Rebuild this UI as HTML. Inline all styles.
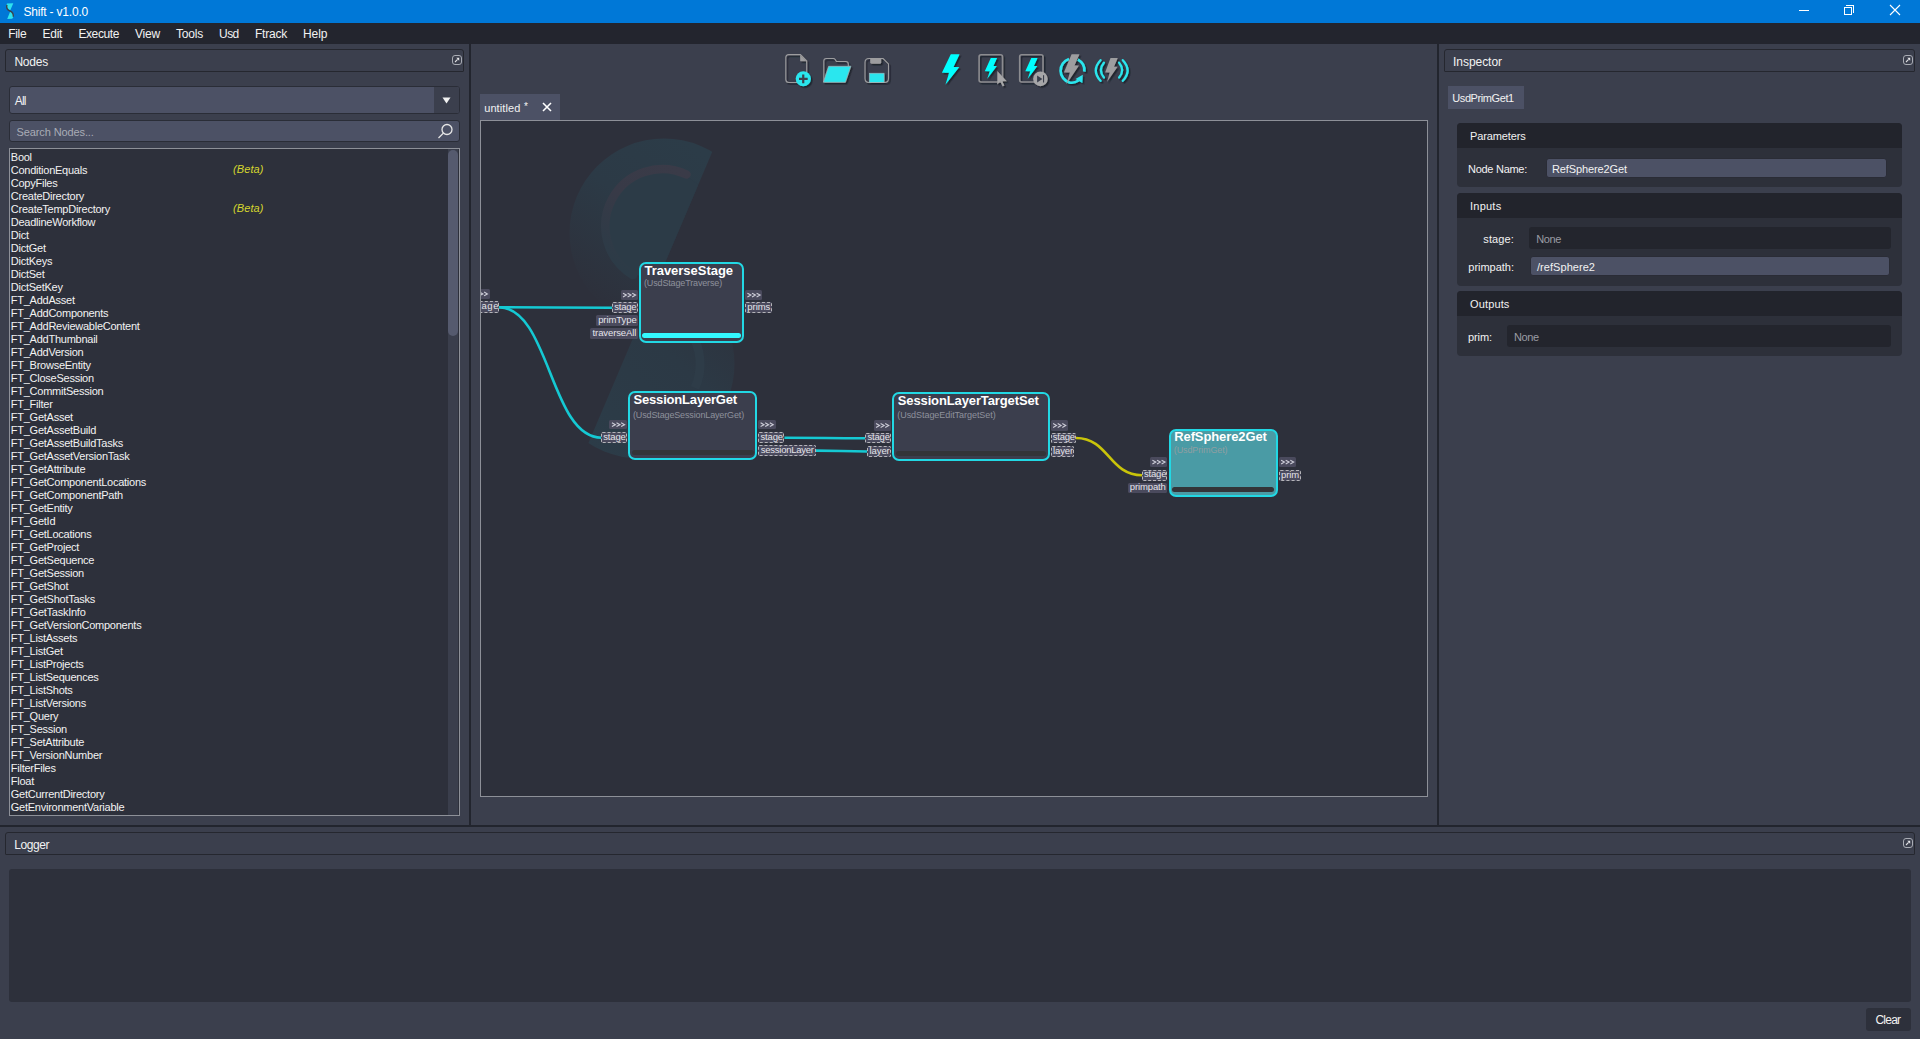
<!DOCTYPE html>
<html><head><meta charset="utf-8"><style>
*{margin:0;padding:0;box-sizing:border-box}
html,body{width:1920px;height:1039px;overflow:hidden;background:#3b3f4d;font-family:"Liberation Sans",sans-serif;color:#e6e6e6}
.a{position:absolute}
.t{position:absolute;white-space:nowrap}
#title{left:0;top:0;width:1920px;height:23px;background:#0078d7;color:#fff}
#menu{left:0;top:23px;width:1920px;height:21px;background:#23252e;font-size:12px;color:#f0f0f0}
.hdr{position:absolute;border:1px solid #25272f;border-radius:3px 3px 1px 1px;background:#3b3f4d;font-size:12px;color:#f0f0f0}
.flt{position:absolute;width:10px;height:10px;border:1.6px solid #a9acb4;border-radius:3px}
.split{position:absolute;background:#22252e}
.list{position:absolute;background:#2d303b;border:1px solid #8d9098}
.item{position:absolute;left:10px;font-size:11px;color:#f2f2f2;white-space:nowrap}
.beta{position:absolute;left:233px;font-size:11px;color:#c8c834;font-style:italic;white-space:nowrap}
.grp{position:absolute;border-radius:4px;background:#2d303a;overflow:hidden}
.gh{position:absolute;left:0;top:0;right:0;background:#22242c;font-size:12px;color:#f0f0f0}
.fld{position:absolute;border-radius:3px;font-size:11px}
.lbl{position:absolute;font-size:11px;color:#f0f0f0;white-space:nowrap}
</style></head><body>
<div class="a" style="left:0px;top:0px;width:1920px;height:23px;background:#0078d7;"></div>
<svg class="a" style="left:0;top:0" width="24" height="23" viewBox="0 0 24 23">
<path d="M7 3.6 L13.3 3.3 L10.3 10.3 C8.5 10 7 8.5 6.6 6.5 C6.5 5 6.6 4.2 7 3.6Z" fill="#2ee3ee"/>
<path d="M10.4 11 C12 11.8 13.5 13.5 13.5 15.5 C13.5 17 12.9 18.3 12 18.7 L7.2 18.9 Z" fill="#2ee3ee"/>
<path d="M6.9 4.8 C6.1 8 7.5 10 10 11 C12.5 12 13.6 13.8 13.3 16.8" stroke="#3a4350" stroke-width="1.4" fill="none"/>
</svg>
<div class="t" style="left:23.40px;top:6px;font-size:12px;line-height:12px;color:#ffffff;letter-spacing:-0.191px;">Shift - v1.0.0</div>
<div class="a" style="left:1799px;top:10px;width:10px;height:1px;background:#ffffff;"></div>
<div class="a" style="left:1844px;top:7px;width:8px;height:8px;border:1px solid #fff"></div>
<div class="a" style="left:1846px;top:5px;width:8px;height:8px;border-top:1px solid #fff;border-right:1px solid #fff"></div>
<svg class="a" style="left:1889px;top:4px" width="12" height="12" viewBox="0 0 12 12"><path d="M1 1L11 11M11 1L1 11" stroke="#fff" stroke-width="1.1"/></svg>
<div class="a" style="left:0px;top:23px;width:1920px;height:21px;background:#23252e;"></div>
<div class="t" style="left:8.25px;top:28px;font-size:12px;line-height:12px;color:#f2f2f2;letter-spacing:-0.311px;">File</div>
<div class="t" style="left:42.50px;top:28px;font-size:12px;line-height:12px;color:#f2f2f2;letter-spacing:-0.247px;">Edit</div>
<div class="t" style="left:78.40px;top:28px;font-size:12px;line-height:12px;color:#f2f2f2;letter-spacing:-0.394px;">Execute</div>
<div class="t" style="left:135.00px;top:28px;font-size:12px;line-height:12px;color:#f2f2f2;letter-spacing:-0.199px;">View</div>
<div class="t" style="left:176.00px;top:28px;font-size:12px;line-height:12px;color:#f2f2f2;letter-spacing:-0.203px;">Tools</div>
<div class="t" style="left:219.00px;top:28px;font-size:12px;line-height:12px;color:#f2f2f2;letter-spacing:-0.531px;">Usd</div>
<div class="t" style="left:255.00px;top:28px;font-size:12px;line-height:12px;color:#f2f2f2;letter-spacing:-0.224px;">Ftrack</div>
<div class="t" style="left:303.00px;top:28px;font-size:12px;line-height:12px;color:#f2f2f2;letter-spacing:-0.047px;">Help</div>
<div class="a" style="left:469px;top:44px;width:2px;height:781px;background:#22252e;"></div>
<div class="a" style="left:1437px;top:44px;width:2px;height:781px;background:#22252e;"></div>
<div class="a" style="left:0px;top:825px;width:1920px;height:2px;background:#22252e;"></div>
<div class="hdr" style="left:5px;top:49px;width:459px;height:23px"></div>
<div class="t" style="left:14.40px;top:56px;font-size:12px;line-height:12px;color:#f2f2f2;letter-spacing:-0.197px;">Nodes</div>
<div class="flt" style="left:452px;top:55px"></div>
<svg class="a" style="left:454px;top:57px" width="6" height="6" viewBox="0 0 6 6"><path d="M1 5L3.6 2.4" stroke="#e0e0e4" stroke-width="1.1"/><path d="M2.3 0.8H5.2V3.7Z" fill="#e8e8ec"/></svg>
<div class="a" style="left:9px;top:86px;width:451px;height:28px;background:#4c5165;border:1px solid #2a2d37;border-radius:3px;overflow:hidden"><div class="a" style="left:424px;top:0;width:26px;height:26px;background:#3b3f4d"></div></div>
<svg class="a" style="left:442px;top:97px" width="9" height="7" viewBox="0 0 9 7"><path d="M0.5 0.5H8.5L4.5 6.5Z" fill="#f2f2f2"/></svg>
<div class="t" style="left:14.75px;top:95px;font-size:12px;line-height:12px;color:#f2f2f2;letter-spacing:-0.848px;">All</div>
<div class="a" style="left:9px;top:120px;width:451px;height:22px;background:#4c5165;border:1px solid #2a2d37;border-radius:3px"></div>
<div class="t" style="left:16.50px;top:127px;font-size:11px;line-height:11px;color:#a9acb6;letter-spacing:-0.108px;">Search Nodes...</div>
<svg class="a" style="left:436px;top:122px" width="18" height="18" viewBox="0 0 18 18"><circle cx="11" cy="7.5" r="5" stroke="#e6e6e6" stroke-width="1.3" fill="none"/><path d="M7.5 11L2.5 16" stroke="#e6e6e6" stroke-width="1.3"/></svg>
<div class="list" style="left:9px;top:148px;width:451px;height:668px"></div>
<div class="a" style="left:448px;top:149px;width:10px;height:666px;background:#3a3e4c;"></div>
<div class="a" style="left:447.5px;top:149.5px;width:10.5px;height:186.5px;background:#555a6e;border-radius:5px"></div>
<div class="t" style="left:10.80px;top:152px;font-size:11px;line-height:11px;color:#f2f2f2;letter-spacing:-0.25px;">Bool</div>
<div class="t" style="left:10.80px;top:165px;font-size:11px;line-height:11px;color:#f2f2f2;letter-spacing:-0.25px;">ConditionEquals</div>
<div class="t" style="left:10.80px;top:178px;font-size:11px;line-height:11px;color:#f2f2f2;letter-spacing:-0.25px;">CopyFiles</div>
<div class="t" style="left:10.80px;top:191px;font-size:11px;line-height:11px;color:#f2f2f2;letter-spacing:-0.25px;">CreateDirectory</div>
<div class="t" style="left:10.80px;top:204px;font-size:11px;line-height:11px;color:#f2f2f2;letter-spacing:-0.25px;">CreateTempDirectory</div>
<div class="t" style="left:10.80px;top:217px;font-size:11px;line-height:11px;color:#f2f2f2;letter-spacing:-0.25px;">DeadlineWorkflow</div>
<div class="t" style="left:10.80px;top:230px;font-size:11px;line-height:11px;color:#f2f2f2;letter-spacing:-0.25px;">Dict</div>
<div class="t" style="left:10.80px;top:243px;font-size:11px;line-height:11px;color:#f2f2f2;letter-spacing:-0.25px;">DictGet</div>
<div class="t" style="left:10.80px;top:256px;font-size:11px;line-height:11px;color:#f2f2f2;letter-spacing:-0.25px;">DictKeys</div>
<div class="t" style="left:10.80px;top:269px;font-size:11px;line-height:11px;color:#f2f2f2;letter-spacing:-0.25px;">DictSet</div>
<div class="t" style="left:10.80px;top:282px;font-size:11px;line-height:11px;color:#f2f2f2;letter-spacing:-0.25px;">DictSetKey</div>
<div class="t" style="left:10.80px;top:295px;font-size:11px;line-height:11px;color:#f2f2f2;letter-spacing:-0.25px;">FT_AddAsset</div>
<div class="t" style="left:10.80px;top:308px;font-size:11px;line-height:11px;color:#f2f2f2;letter-spacing:-0.25px;">FT_AddComponents</div>
<div class="t" style="left:10.80px;top:321px;font-size:11px;line-height:11px;color:#f2f2f2;letter-spacing:-0.25px;">FT_AddReviewableContent</div>
<div class="t" style="left:10.80px;top:334px;font-size:11px;line-height:11px;color:#f2f2f2;letter-spacing:-0.25px;">FT_AddThumbnail</div>
<div class="t" style="left:10.80px;top:347px;font-size:11px;line-height:11px;color:#f2f2f2;letter-spacing:-0.25px;">FT_AddVersion</div>
<div class="t" style="left:10.80px;top:360px;font-size:11px;line-height:11px;color:#f2f2f2;letter-spacing:-0.25px;">FT_BrowseEntity</div>
<div class="t" style="left:10.80px;top:373px;font-size:11px;line-height:11px;color:#f2f2f2;letter-spacing:-0.25px;">FT_CloseSession</div>
<div class="t" style="left:10.80px;top:386px;font-size:11px;line-height:11px;color:#f2f2f2;letter-spacing:-0.25px;">FT_CommitSession</div>
<div class="t" style="left:10.80px;top:399px;font-size:11px;line-height:11px;color:#f2f2f2;letter-spacing:-0.25px;">FT_Filter</div>
<div class="t" style="left:10.80px;top:412px;font-size:11px;line-height:11px;color:#f2f2f2;letter-spacing:-0.25px;">FT_GetAsset</div>
<div class="t" style="left:10.80px;top:425px;font-size:11px;line-height:11px;color:#f2f2f2;letter-spacing:-0.25px;">FT_GetAssetBuild</div>
<div class="t" style="left:10.80px;top:438px;font-size:11px;line-height:11px;color:#f2f2f2;letter-spacing:-0.25px;">FT_GetAssetBuildTasks</div>
<div class="t" style="left:10.80px;top:451px;font-size:11px;line-height:11px;color:#f2f2f2;letter-spacing:-0.25px;">FT_GetAssetVersionTask</div>
<div class="t" style="left:10.80px;top:464px;font-size:11px;line-height:11px;color:#f2f2f2;letter-spacing:-0.25px;">FT_GetAttribute</div>
<div class="t" style="left:10.80px;top:477px;font-size:11px;line-height:11px;color:#f2f2f2;letter-spacing:-0.25px;">FT_GetComponentLocations</div>
<div class="t" style="left:10.80px;top:490px;font-size:11px;line-height:11px;color:#f2f2f2;letter-spacing:-0.25px;">FT_GetComponentPath</div>
<div class="t" style="left:10.80px;top:503px;font-size:11px;line-height:11px;color:#f2f2f2;letter-spacing:-0.25px;">FT_GetEntity</div>
<div class="t" style="left:10.80px;top:516px;font-size:11px;line-height:11px;color:#f2f2f2;letter-spacing:-0.25px;">FT_GetId</div>
<div class="t" style="left:10.80px;top:529px;font-size:11px;line-height:11px;color:#f2f2f2;letter-spacing:-0.25px;">FT_GetLocations</div>
<div class="t" style="left:10.80px;top:542px;font-size:11px;line-height:11px;color:#f2f2f2;letter-spacing:-0.25px;">FT_GetProject</div>
<div class="t" style="left:10.80px;top:555px;font-size:11px;line-height:11px;color:#f2f2f2;letter-spacing:-0.25px;">FT_GetSequence</div>
<div class="t" style="left:10.80px;top:568px;font-size:11px;line-height:11px;color:#f2f2f2;letter-spacing:-0.25px;">FT_GetSession</div>
<div class="t" style="left:10.80px;top:581px;font-size:11px;line-height:11px;color:#f2f2f2;letter-spacing:-0.25px;">FT_GetShot</div>
<div class="t" style="left:10.80px;top:594px;font-size:11px;line-height:11px;color:#f2f2f2;letter-spacing:-0.25px;">FT_GetShotTasks</div>
<div class="t" style="left:10.80px;top:607px;font-size:11px;line-height:11px;color:#f2f2f2;letter-spacing:-0.25px;">FT_GetTaskInfo</div>
<div class="t" style="left:10.80px;top:620px;font-size:11px;line-height:11px;color:#f2f2f2;letter-spacing:-0.25px;">FT_GetVersionComponents</div>
<div class="t" style="left:10.80px;top:633px;font-size:11px;line-height:11px;color:#f2f2f2;letter-spacing:-0.25px;">FT_ListAssets</div>
<div class="t" style="left:10.80px;top:646px;font-size:11px;line-height:11px;color:#f2f2f2;letter-spacing:-0.25px;">FT_ListGet</div>
<div class="t" style="left:10.80px;top:659px;font-size:11px;line-height:11px;color:#f2f2f2;letter-spacing:-0.25px;">FT_ListProjects</div>
<div class="t" style="left:10.80px;top:672px;font-size:11px;line-height:11px;color:#f2f2f2;letter-spacing:-0.25px;">FT_ListSequences</div>
<div class="t" style="left:10.80px;top:685px;font-size:11px;line-height:11px;color:#f2f2f2;letter-spacing:-0.25px;">FT_ListShots</div>
<div class="t" style="left:10.80px;top:698px;font-size:11px;line-height:11px;color:#f2f2f2;letter-spacing:-0.25px;">FT_ListVersions</div>
<div class="t" style="left:10.80px;top:711px;font-size:11px;line-height:11px;color:#f2f2f2;letter-spacing:-0.25px;">FT_Query</div>
<div class="t" style="left:10.80px;top:724px;font-size:11px;line-height:11px;color:#f2f2f2;letter-spacing:-0.25px;">FT_Session</div>
<div class="t" style="left:10.80px;top:737px;font-size:11px;line-height:11px;color:#f2f2f2;letter-spacing:-0.25px;">FT_SetAttribute</div>
<div class="t" style="left:10.80px;top:750px;font-size:11px;line-height:11px;color:#f2f2f2;letter-spacing:-0.25px;">FT_VersionNumber</div>
<div class="t" style="left:10.80px;top:763px;font-size:11px;line-height:11px;color:#f2f2f2;letter-spacing:-0.25px;">FilterFiles</div>
<div class="t" style="left:10.80px;top:776px;font-size:11px;line-height:11px;color:#f2f2f2;letter-spacing:-0.25px;">Float</div>
<div class="t" style="left:10.80px;top:789px;font-size:11px;line-height:11px;color:#f2f2f2;letter-spacing:-0.25px;">GetCurrentDirectory</div>
<div class="t" style="left:10.80px;top:802px;font-size:11px;line-height:11px;color:#f2f2f2;letter-spacing:-0.25px;">GetEnvironmentVariable</div>
<div class="t" style="left:233.00px;top:164px;font-size:11px;line-height:11px;color:#d6d62e;font-style:italic;letter-spacing:0.089px;">(Beta)</div>
<div class="t" style="left:233.00px;top:203px;font-size:11px;line-height:11px;color:#d6d62e;font-style:italic;letter-spacing:0.089px;">(Beta)</div>
<svg class="a" style="left:0;top:0" width="1200" height="100" viewBox="0 0 1200 100">
<defs><filter id="ds" x="-20%" y="-20%" width="150%" height="150%"><feDropShadow dx="1.6" dy="1.6" stdDeviation="0.7" flood-color="#1f2129" flood-opacity="0.95"/></filter></defs>
<g filter="url(#ds)">
<path d="M800.4 54.6 H788.8 Q785.8 54.6 785.8 57.6 V79.5 Q785.8 82.5 788.8 82.5 H803.7 Q806.7 82.5 806.7 79.5 V61 Z" stroke="#9d9d9f" stroke-width="1.1" fill="none"/>
<path d="M800.2 55 V61.2 H806.5 Z" fill="#9d9d9f"/>
<circle cx="803.3" cy="78.75" r="7.6" fill="#2ce6ee"/>
<path d="M803.25 74.4 V83.3 M799 78.85 H807.7" stroke="#3b3f4d" stroke-width="2.2"/>
</g>
<g filter="url(#ds)">
<path d="M823.8 82 V61 Q823.8 58.5 826.3 58.5 H833.5 Q834.5 58.5 835.2 59.5 L836.4 61.5 H845.8 Q848.3 61.5 848.3 64 V66.5" stroke="#9d9d9f" stroke-width="1.1" fill="none"/>
<path d="M828.6 66.3 H850.8 L845.4 82.3 H823.4 Z" fill="#2ce6ee" stroke="#a9b4b8" stroke-width="0.7" stroke-linejoin="round"/>
</g>
<g filter="url(#ds)">
<path d="M869 58.5 H883.1 L888.5 63.9 V78.5 Q888.5 82.5 884.5 82.5 H869 Q865 82.5 865 78.5 V62.5 Q865 58.5 869 58.5 Z" stroke="#9d9d9f" stroke-width="1.1" fill="none"/>
<path d="M870.2 58.5 H881.2 V62.2 Q881.2 63.7 879.7 63.7 H871.7 Q870.2 63.7 870.2 62.2 Z" fill="#9d9d9f"/>
<rect x="869.3" y="73.2" width="14.8" height="9.1" fill="#2ce6ee" stroke="#a9b4b8" stroke-width="0.6"/>
</g>
<g filter="url(#ds)">
<polygon points="950.8,54.2 959.6,54.2 953.5,66.9 959.3,66.9 945.4,84.8 949.1,72.8 941.9,72.8" fill="#00ffff"/>
</g>
<g filter="url(#ds)">
<rect x="979.1" y="54.7" width="23.4" height="27.3" rx="2" stroke="#8c8c90" stroke-width="1.6" fill="none"/>
<polygon points="990.8,58 997.1,58 993.4,66 996.9,66 987.1,78.9 989.8,71.3 984.8,71.3" fill="#00ffff"/>
<polygon points="997.3,71.1 997.3,84.4 1000.3,81.6 1002.6,86.5 1004.4,85.6 1002.3,81.2 1006.8,81.25" fill="#a6a6a8"/>
</g>
<g filter="url(#ds)">
<rect x="1019.7" y="54.7" width="23.3" height="27.3" rx="2" stroke="#8c8c90" stroke-width="1.6" fill="none"/>
<polygon points="1031.3,58 1037.6,58 1033.9,66 1037.4,66 1027.6,78.9 1030.3,71.3 1025.3,71.3" fill="#00ffff"/>
<circle cx="1040.4" cy="78.9" r="7.3" fill="#a6a6a8"/>
<path d="M1037.1 75.4 V82.4 L1042.4 78.9 Z" fill="#3b3f4d"/>
<rect x="1043" y="75.2" width="1.1" height="7.3" fill="#3b3f4d"/>
</g>
<g filter="url(#ds)">
<path d="M1084.3 71.7 A12.3 12.3 0 0 0 1078 59.6" stroke="#2ce6ee" stroke-width="2.7" fill="none"/>
<path d="M1069 59 A12.3 12.3 0 0 0 1069.5 82.5 Q1074 83.5 1078.5 80.5" stroke="#2ce6ee" stroke-width="2.7" fill="none"/>
<polygon points="1082.8,74.8 1082.3,83 1075.5,79" fill="#2ce6ee"/>
<polygon points="1071.6,54.2 1079.5,54.2 1074.5,65.6 1079,65.6 1066.4,84.2 1069.9,72.5 1063.9,72.5" fill="#9d9d9f"/>
</g>
<g filter="url(#ds)">
<path d="M1100.5 60.2 Q1091 70.5 1100.5 80.8" stroke="#2ce6ee" stroke-width="2.3" fill="none" stroke-linecap="round"/>
<path d="M1103.9 62.7 Q1097.8 70.1 1103.9 77.5" stroke="#2ce6ee" stroke-width="2.3" fill="none" stroke-linecap="round"/>
<path d="M1122.8 60.2 Q1132.3 70.5 1122.8 80.8" stroke="#2ce6ee" stroke-width="2.3" fill="none" stroke-linecap="round"/>
<path d="M1119.1 62.7 Q1125.2 70.1 1119.1 77.5" stroke="#2ce6ee" stroke-width="2.3" fill="none" stroke-linecap="round"/>
<polygon points="1110.5,57.9 1117.8,57.9 1114,66.7 1117.6,66.7 1107,82.1 1109.7,72.5 1105.1,72.5" fill="#9d9d9f"/>
</g>
</svg>
<div class="a" style="left:480px;top:94px;width:80px;height:26px;background:#4c5165;"></div>
<div class="t" style="left:484.20px;top:103px;font-size:11px;line-height:11px;color:#f2f2f2;letter-spacing:0.089px;">untitled</div>
<div class="t" style="left:524.00px;top:102px;font-size:10px;line-height:10px;color:#f2f2f2;">*</div>
<svg class="a" style="left:542px;top:102px" width="10" height="10" viewBox="0 0 10 10"><path d="M1 1L9 9M9 1L1 9" stroke="#fff" stroke-width="1.6"/></svg>
<div class="a" style="left:480px;top:120px;width:948px;height:677px;border:1px solid #8d9098;background:#2d303b"></div>
<div class="a" style="left:481px;top:121px;width:946px;height:675px;overflow:hidden"><div class="a" style="left:-481px;top:-121px;width:1920px;height:1039px">
<svg class="a" style="left:0;top:0" width="1920" height="1039" viewBox="0 0 1920 1039">
<defs>
<clipPath id="cl"><polygon points="400,80 742.8,80 538.7,560 400,560"/></clipPath>
<clipPath id="cr"><polygon points="742.8,80 900,80 900,560 538.7,560"/></clipPath>
<linearGradient id="gu" gradientUnits="userSpaceOnUse" x1="700" y1="150" x2="590" y2="300"><stop offset="0" stop-color="#2c3c48"/><stop offset="0.45" stop-color="#2c3a46"/><stop offset="1" stop-color="#2d303b"/></linearGradient>
<linearGradient id="gl" gradientUnits="userSpaceOnUse" x1="590" y1="450" x2="735" y2="300"><stop offset="0" stop-color="#2c3c48"/><stop offset="0.6" stop-color="#2c3945"/><stop offset="1" stop-color="#2d323d"/></linearGradient>
<linearGradient id="ga" gradientUnits="userSpaceOnUse" x1="680" y1="170" x2="615" y2="265"><stop offset="0" stop-color="#3a3b48"/><stop offset="0.45" stop-color="#383a47"/><stop offset="1" stop-color="#2c3b47"/></linearGradient>
</defs>
<g clip-path="url(#cl)">
<circle cx="664" cy="233" r="94.5" fill="url(#gu)"/>
<circle cx="662" cy="226" r="55" fill="#2c3b47"/>
<path d="M 686.5 174.5 A 57 57 0 0 0 633 275" stroke="url(#ga)" stroke-width="8.5" stroke-linecap="round" fill="none"/>
</g>
<g clip-path="url(#cr)">
<circle cx="640" cy="364" r="94.5" fill="url(#gl)"/>
<path d="M 690 331 A 59 59 0 0 1 695 388" stroke="#2e3c48" stroke-width="9" fill="none"/>
</g>
</svg>
<svg class="a" style="left:0;top:0" width="1920" height="1039" viewBox="0 0 1920 1039"><path d="M498.5 307.2 C555.25 307.2 555.25 307.8 612 307.8" stroke="#15c9d3" stroke-width="2.6" fill="none"/><path d="M498.5 307.2 C550.0 307.2 550.0 437.7 601.5 437.7" stroke="#15c9d3" stroke-width="2.6" fill="none"/><path d="M784.4 437.7 C824.95 437.7 824.95 438.3 865.5 438.3" stroke="#15c9d3" stroke-width="2.6" fill="none"/><path d="M815.6 450.6 C841.55 450.6 841.55 451.5 867.5 451.5" stroke="#15c9d3" stroke-width="2.6" fill="none"/><path d="M1076 438 C1109.0 438 1109.0 475.2 1142 475.2" stroke="#c9c40a" stroke-width="2.6" fill="none"/></svg>
<div class="a" style="left:639px;top:261.5px;width:105px;height:81.0px;border:2px solid #22d8e4;border-radius:7px;background:#3b3e4d"></div>
<div class="a" style="left:642px;top:332.6px;width:99px;height:5.699999999999989px;background:#33f8ff;border-radius:3px"></div>
<div class="t" style="left:644.50px;top:264px;font-size:13px;line-height:13px;color:#ffffff;font-weight:700;letter-spacing:-0.031px;">TraverseStage</div>
<div class="t" style="left:644.00px;top:279px;font-size:9px;line-height:9px;color:#8e919c;letter-spacing:-0.150px;">(UsdStageTraverse)</div>
<div class="a" style="left:620.6px;top:290.0px;width:17.2px;height:10.3px;background:#4a4a5d;border-radius:1.5px;"></div>
<svg class="a" style="left:0;top:0" width="1920" height="1039"><path d="M623.0 293.2 L626.4 295.1 L623.0 297.0" stroke="#cdcdd8" stroke-width="1.1" fill="none"/><path d="M627.6 293.2 L631.0 295.1 L627.6 297.0" stroke="#cdcdd8" stroke-width="1.1" fill="none"/><path d="M632.2 293.2 L635.6 295.1 L632.2 297.0" stroke="#cdcdd8" stroke-width="1.1" fill="none"/></svg>
<div class="a" style="left:611.8px;top:302.4px;width:26.0px;height:10.9px;background:#4a4a5d;border-radius:1.5px;border:1px dashed #b4b4b8;"></div>
<div class="t" style="left:614.15px;top:302px;font-size:9.5px;line-height:9.5px;color:#e4e4ea;letter-spacing:-0.190px;">stage</div>
<div class="a" style="left:596.0px;top:315.4px;width:41.8px;height:10.4px;background:#4a4a5d;border-radius:1.5px;"></div>
<div class="t" style="left:598.15px;top:315px;font-size:9.5px;line-height:9.5px;color:#e4e4ea;letter-spacing:-0.072px;">primType</div>
<div class="a" style="left:590.0px;top:328.4px;width:47.8px;height:10.5px;background:#4a4a5d;border-radius:1.5px;"></div>
<div class="t" style="left:592.55px;top:328px;font-size:9.5px;line-height:9.5px;color:#e4e4ea;letter-spacing:-0.107px;">traverseAll</div>
<div class="a" style="left:745.0px;top:290.0px;width:17.3px;height:10.3px;background:#4a4a5d;border-radius:1.5px;"></div>
<svg class="a" style="left:0;top:0" width="1920" height="1039"><path d="M747.4 293.2 L750.9 295.1 L747.4 297.0" stroke="#cdcdd8" stroke-width="1.1" fill="none"/><path d="M752.0 293.2 L755.5 295.1 L752.0 297.0" stroke="#cdcdd8" stroke-width="1.1" fill="none"/><path d="M756.6 293.2 L760.1 295.1 L756.6 297.0" stroke="#cdcdd8" stroke-width="1.1" fill="none"/></svg>
<div class="a" style="left:744.6px;top:302.4px;width:27.4px;height:10.9px;background:#4a4a5d;border-radius:1.5px;border:1px dashed #b4b4b8;"></div>
<div class="t" style="left:747.30px;top:302px;font-size:9.5px;line-height:9.5px;color:#e4e4ea;letter-spacing:-0.047px;">prims</div>
<div class="a" style="left:628px;top:391px;width:129.25px;height:68.75px;border:2px solid #22d8e4;border-radius:7px;background:#3b3e4d"></div>
<div class="a" style="left:632px;top:450px;width:122px;height:5px;background:#333438;border-radius:3px"></div>
<div class="t" style="left:633.50px;top:393px;font-size:13px;line-height:13px;color:#ffffff;font-weight:700;letter-spacing:-0.181px;">SessionLayerGet</div>
<div class="t" style="left:633.00px;top:411px;font-size:9px;line-height:9px;color:#8e919c;letter-spacing:-0.142px;">(UsdStageSessionLayerGet)</div>
<div class="a" style="left:609.4px;top:420.0px;width:17.5px;height:9.4px;background:#4a4a5d;border-radius:1.5px;"></div>
<svg class="a" style="left:0;top:0" width="1920" height="1039"><path d="M611.9 422.8 L615.4 424.7 L611.9 426.6" stroke="#cdcdd8" stroke-width="1.1" fill="none"/><path d="M616.5 422.8 L620.0 424.7 L616.5 426.6" stroke="#cdcdd8" stroke-width="1.1" fill="none"/><path d="M621.1 422.8 L624.6 424.7 L621.1 426.6" stroke="#cdcdd8" stroke-width="1.1" fill="none"/></svg>
<div class="a" style="left:601.0px;top:432.2px;width:25.9px;height:10.9px;background:#4a4a5d;border-radius:1.5px;border:1px dashed #b4b4b8;"></div>
<div class="t" style="left:603.30px;top:432px;font-size:9.5px;line-height:9.5px;color:#e4e4ea;letter-spacing:-0.190px;">stage</div>
<div class="a" style="left:758.0px;top:420.0px;width:17.6px;height:9.4px;background:#4a4a5d;border-radius:1.5px;"></div>
<svg class="a" style="left:0;top:0" width="1920" height="1039"><path d="M760.6 422.8 L764.0 424.7 L760.6 426.6" stroke="#cdcdd8" stroke-width="1.1" fill="none"/><path d="M765.2 422.8 L768.6 424.7 L765.2 426.6" stroke="#cdcdd8" stroke-width="1.1" fill="none"/><path d="M769.8 422.8 L773.2 424.7 L769.8 426.6" stroke="#cdcdd8" stroke-width="1.1" fill="none"/></svg>
<div class="a" style="left:758.0px;top:432.2px;width:26.4px;height:10.9px;background:#4a4a5d;border-radius:1.5px;border:1px dashed #b4b4b8;"></div>
<div class="t" style="left:760.55px;top:432px;font-size:9.5px;line-height:9.5px;color:#e4e4ea;letter-spacing:-0.190px;">stage</div>
<div class="a" style="left:758.0px;top:445.2px;width:57.6px;height:11.0px;background:#4a4a5d;border-radius:1.5px;border:1px dashed #b4b4b8;"></div>
<div class="t" style="left:760.80px;top:445px;font-size:9.5px;line-height:9.5px;color:#e4e4ea;letter-spacing:-0.249px;">sessionLayer</div>
<div class="a" style="left:892.25px;top:392.25px;width:157.5px;height:68.35000000000002px;border:2px solid #22d8e4;border-radius:7px;background:#3b3e4d"></div>
<div class="a" style="left:895.6px;top:450.6px;width:150.39999999999998px;height:5.649999999999977px;background:#333438;border-radius:3px"></div>
<div class="t" style="left:897.75px;top:394px;font-size:13px;line-height:13px;color:#ffffff;font-weight:700;letter-spacing:-0.121px;">SessionLayerTargetSet</div>
<div class="t" style="left:897.25px;top:411px;font-size:9px;line-height:9px;color:#8e919c;letter-spacing:-0.051px;">(UsdStageEditTargetSet)</div>
<div class="a" style="left:873.5px;top:420.4px;width:17.5px;height:10.2px;background:#4a4a5d;border-radius:1.5px;"></div>
<svg class="a" style="left:0;top:0" width="1920" height="1039"><path d="M876.0 423.6 L879.5 425.5 L876.0 427.4" stroke="#cdcdd8" stroke-width="1.1" fill="none"/><path d="M880.6 423.6 L884.1 425.5 L880.6 427.4" stroke="#cdcdd8" stroke-width="1.1" fill="none"/><path d="M885.2 423.6 L888.7 425.5 L885.2 427.4" stroke="#cdcdd8" stroke-width="1.1" fill="none"/></svg>
<div class="a" style="left:865.2px;top:433.0px;width:25.8px;height:10.0px;background:#4a4a5d;border-radius:1.5px;border:1px dashed #b4b4b8;"></div>
<div class="t" style="left:867.48px;top:432px;font-size:9.5px;line-height:9.5px;color:#e4e4ea;letter-spacing:-0.190px;">stage</div>
<div class="a" style="left:867.2px;top:446.2px;width:23.8px;height:10.6px;background:#4a4a5d;border-radius:1.5px;border:1px dashed #b4b4b8;"></div>
<div class="t" style="left:869.62px;top:446px;font-size:9.5px;line-height:9.5px;color:#e4e4ea;letter-spacing:-0.119px;">layer</div>
<div class="a" style="left:1050.6px;top:420.4px;width:17.4px;height:10.2px;background:#4a4a5d;border-radius:1.5px;"></div>
<svg class="a" style="left:0;top:0" width="1920" height="1039"><path d="M1053.1 423.6 L1056.5 425.5 L1053.1 427.4" stroke="#cdcdd8" stroke-width="1.1" fill="none"/><path d="M1057.7 423.6 L1061.1 425.5 L1057.7 427.4" stroke="#cdcdd8" stroke-width="1.1" fill="none"/><path d="M1062.3 423.6 L1065.7 425.5 L1062.3 427.4" stroke="#cdcdd8" stroke-width="1.1" fill="none"/></svg>
<div class="a" style="left:1050.6px;top:433.0px;width:25.4px;height:10.0px;background:#4a4a5d;border-radius:1.5px;border:1px dashed #b4b4b8;"></div>
<div class="t" style="left:1052.65px;top:432px;font-size:9.5px;line-height:9.5px;color:#e4e4ea;letter-spacing:-0.190px;">stage</div>
<div class="a" style="left:1050.6px;top:446.2px;width:23.8px;height:10.6px;background:#4a4a5d;border-radius:1.5px;border:1px dashed #b4b4b8;"></div>
<div class="t" style="left:1053.00px;top:446px;font-size:9.5px;line-height:9.5px;color:#e4e4ea;letter-spacing:-0.119px;">layer</div>
<div class="a" style="left:1168.75px;top:428.5px;width:108.75px;height:68.39999999999998px;border:2px solid #22d8e4;border-radius:7px;background:#4a9ba5"></div>
<div class="a" style="left:1172px;top:487.25px;width:102.40000000000009px;height:5.0px;background:#333438;border-radius:3px"></div>
<div class="t" style="left:1174.25px;top:430px;font-size:13px;line-height:13px;color:#ffffff;font-weight:700;letter-spacing:-0.109px;">RefSphere2Get</div>
<div class="t" style="left:1173.75px;top:446px;font-size:9px;line-height:9px;color:#8f9ea2;letter-spacing:-0.105px;">(UsdPrimGet)</div>
<div class="a" style="left:1150.0px;top:457.0px;width:17.2px;height:10.2px;background:#4a4a5d;border-radius:1.5px;"></div>
<svg class="a" style="left:0;top:0" width="1920" height="1039"><path d="M1152.4 460.2 L1155.8 462.1 L1152.4 464.0" stroke="#cdcdd8" stroke-width="1.1" fill="none"/><path d="M1157.0 460.2 L1160.4 462.1 L1157.0 464.0" stroke="#cdcdd8" stroke-width="1.1" fill="none"/><path d="M1161.6 460.2 L1165.0 462.1 L1161.6 464.0" stroke="#cdcdd8" stroke-width="1.1" fill="none"/></svg>
<div class="a" style="left:1142.0px;top:469.8px;width:25.2px;height:10.9px;background:#4a4a5d;border-radius:1.5px;border:1px dashed #b4b4b8;"></div>
<div class="t" style="left:1143.97px;top:469px;font-size:9.5px;line-height:9.5px;color:#e4e4ea;letter-spacing:-0.190px;">stage</div>
<div class="a" style="left:1127.5px;top:483.0px;width:39.5px;height:9.5px;background:#4a4a5d;border-radius:1.5px;"></div>
<div class="t" style="left:1129.75px;top:482px;font-size:9.5px;line-height:9.5px;color:#e4e4ea;letter-spacing:-0.121px;">primpath</div>
<div class="a" style="left:1279.0px;top:457.0px;width:16.6px;height:10.2px;background:#4a4a5d;border-radius:1.5px;"></div>
<svg class="a" style="left:0;top:0" width="1920" height="1039"><path d="M1281.1 460.2 L1284.5 462.1 L1281.1 464.0" stroke="#cdcdd8" stroke-width="1.1" fill="none"/><path d="M1285.7 460.2 L1289.1 462.1 L1285.7 464.0" stroke="#cdcdd8" stroke-width="1.1" fill="none"/><path d="M1290.3 460.2 L1293.7 462.1 L1290.3 464.0" stroke="#cdcdd8" stroke-width="1.1" fill="none"/></svg>
<div class="a" style="left:1278.5px;top:470.0px;width:22.1px;height:11.0px;background:#4a4a5d;border-radius:1.5px;border:1px dashed #b4b4b8;"></div>
<div class="t" style="left:1281.05px;top:470px;font-size:9.5px;line-height:9.5px;color:#e4e4ea;letter-spacing:-0.121px;">prim</div>
<div class="a" style="left:472.3px;top:289.0px;width:17.5px;height:9.8px;background:#4a4a5d;border-radius:1.5px;"></div>
<svg class="a" style="left:0;top:0" width="1920" height="1039"><path d="M474.9 292.0 L478.2 293.9 L474.9 295.8" stroke="#cdcdd8" stroke-width="1.1" fill="none"/><path d="M479.5 292.0 L482.9 293.9 L479.5 295.8" stroke="#cdcdd8" stroke-width="1.1" fill="none"/><path d="M484.1 292.0 L487.4 293.9 L484.1 295.8" stroke="#cdcdd8" stroke-width="1.1" fill="none"/></svg>
<div class="a" style="left:472.5px;top:301.3px;width:26.0px;height:11.4px;background:#4a4a5d;border-radius:1.5px;border:1px dashed #b4b4b8;"></div>
<div class="t" style="left:473.00px;top:301px;font-size:9.5px;line-height:9.5px;color:#e4e4ea;letter-spacing:0.550px;">stage</div>
</div></div>
<div class="hdr" style="left:1444px;top:49px;width:471px;height:23px"></div>
<div class="t" style="left:1453.00px;top:56px;font-size:12px;line-height:12px;color:#f2f2f2;letter-spacing:-0.040px;">Inspector</div>
<div class="flt" style="left:1903px;top:55px"></div>
<svg class="a" style="left:1905px;top:57px" width="6" height="6" viewBox="0 0 6 6"><path d="M1 5L3.6 2.4" stroke="#e0e0e4" stroke-width="1.1"/><path d="M2.3 0.8H5.2V3.7Z" fill="#e8e8ec"/></svg>
<div class="a" style="left:1448px;top:86px;width:76px;height:23px;background:#4c5165;"></div>
<div class="t" style="left:1452.30px;top:93px;font-size:11px;line-height:11px;color:#f2f2f2;letter-spacing:-0.412px;">UsdPrimGet1</div>
<div class="grp" style="left:1457px;top:123px;width:445px;height:64px"><div class="gh" style="height:25px"></div></div>
<div class="t" style="left:1470.00px;top:131px;font-size:11px;line-height:11px;color:#f2f2f2;letter-spacing:-0.126px;">Parameters</div>
<div class="t" style="left:1468.00px;top:164px;font-size:11px;line-height:11px;color:#f2f2f2;letter-spacing:-0.277px;">Node Name:</div>
<div class="fld" style="left:1546px;top:158px;width:341px;height:20px;background:#4c5165;border:1px solid #2a2c36;"></div>
<div class="t" style="left:1552.00px;top:164px;font-size:11px;line-height:11px;color:#f2f2f2;letter-spacing:-0.111px;">RefSphere2Get</div>
<div class="grp" style="left:1457px;top:193px;width:445px;height:92.5px"><div class="gh" style="height:25px"></div></div>
<div class="t" style="left:1470.00px;top:201px;font-size:11px;line-height:11px;color:#f2f2f2;letter-spacing:0.239px;">Inputs</div>
<div class="t" style="left:1483.30px;top:234px;font-size:11px;line-height:11px;color:#f2f2f2;letter-spacing:0.122px;">stage:</div>
<div class="fld" style="left:1529px;top:227px;width:362px;height:22px;background:#23252d;"></div>
<div class="t" style="left:1536.30px;top:234px;font-size:11px;line-height:11px;color:#9a9ca4;letter-spacing:-0.399px;">None</div>
<div class="t" style="left:1468.30px;top:262px;font-size:11px;line-height:11px;color:#f2f2f2;letter-spacing:-0.018px;">primpath:</div>
<div class="fld" style="left:1530px;top:256px;width:360px;height:20px;background:#4c5165;border:1px solid #2a2c36;"></div>
<div class="t" style="left:1537.00px;top:262px;font-size:11px;line-height:11px;color:#f2f2f2;letter-spacing:0.047px;">/refSphere2</div>
<div class="grp" style="left:1457px;top:291px;width:445px;height:65px"><div class="gh" style="height:25px"></div></div>
<div class="t" style="left:1470.00px;top:299px;font-size:11px;line-height:11px;color:#f2f2f2;letter-spacing:0.138px;">Outputs</div>
<div class="t" style="left:1468.00px;top:332px;font-size:11px;line-height:11px;color:#f2f2f2;letter-spacing:-0.091px;">prim:</div>
<div class="fld" style="left:1507px;top:325px;width:384px;height:22px;background:#23252d;"></div>
<div class="t" style="left:1514.00px;top:332px;font-size:11px;line-height:11px;color:#9a9ca4;letter-spacing:-0.399px;">None</div>
<div class="hdr" style="left:5px;top:832px;width:1910px;height:23px"></div>
<div class="t" style="left:14.20px;top:839px;font-size:12px;line-height:12px;color:#f2f2f2;letter-spacing:-0.396px;">Logger</div>
<div class="flt" style="left:1903px;top:838px"></div>
<svg class="a" style="left:1905px;top:840px" width="6" height="6" viewBox="0 0 6 6"><path d="M1 5L3.6 2.4" stroke="#e0e0e4" stroke-width="1.1"/><path d="M2.3 0.8H5.2V3.7Z" fill="#e8e8ec"/></svg>
<div class="a" style="left:9px;top:869px;width:1902px;height:133px;background:#2d303b;border-radius:3px"></div>
<div class="a" style="left:1866px;top:1008px;width:45px;height:23px;background:#2d303b;border-radius:3px"></div>
<div class="t" style="left:1875.40px;top:1014px;font-size:12px;line-height:12px;color:#f2f2f2;letter-spacing:-0.738px;">Clear</div>
</body></html>
